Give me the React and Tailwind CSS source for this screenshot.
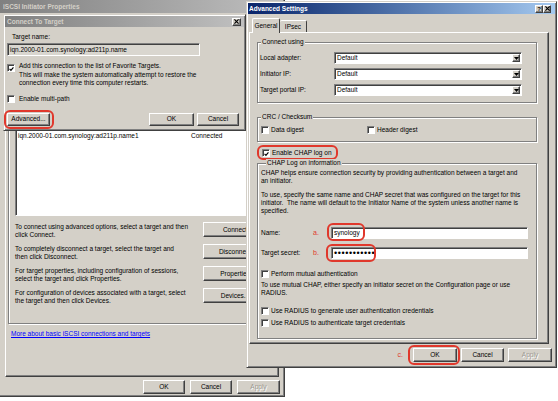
const raised =
  "border border-t-white border-l-white border-r-[#404040] border-b-[#404040] shadow-[inset_-1px_-1px_0_#808080]";
const sunken =
  "border border-t-[#808080] border-l-[#808080] border-r-white border-b-white shadow-[inset_1px_1px_0_#404040]";
const frame =
  "border border-t-[#d4d0c8] border-l-[#d4d0c8] border-r-[#404040] border-b-[#404040] shadow-[inset_1px_1px_0_white,inset_-1px_-1px_0_#808080]";
const etched = "border border-[#808080] shadow-[inset_1px_1px_0_white,1px_1px_0_white]";

function Btn({ w, h = "h-[14px]", children, disabled, className = "" }) {
  return (
    <div
      className={`${raised} ${w} ${h} shrink-0 flex items-center justify-center bg-[#d4d0c8] ${
        disabled ? "text-[#9a978f] [text-shadow:1px_1px_0_white]" : ""
      } ${className}`}
    >
      {children}
    </div>
  );
}

function Check({ checked }) {
  return (
    <div className={`${sunken} w-[8px] h-[8px] shrink-0 bg-white flex items-center justify-center`}>
      {checked && (
        <svg width="6" height="6" viewBox="0 0 7 7" className="ml-[1px] mt-[1px]">
          <path d="M0.8 3.4 L2.7 5.3 L6.2 1.2" fill="none" stroke="#000" strokeWidth="1.6" />
        </svg>
      )}
    </div>
  );
}

function CheckRow({ checked, children, className = "" }) {
  return (
    <div className={`flex items-center gap-[2px] h-[8px] ${className}`}>
      <Check checked={checked} />
      <span>{children}</span>
    </div>
  );
}

function Group({ label, labelLeft = "left-[3px]", className, children }) {
  return (
    <div className={`relative ${etched} ${className}`}>
      <span className={`absolute top-[-5px] ${labelLeft} px-[1px] bg-[#d4d0c8] leading-[8px]`}>{label}</span>
      {children}
    </div>
  );
}

function Dropdown() {
  return (
    <div className={`${sunken} w-[188px] h-[12px] bg-white flex items-center justify-between pl-[2px] pr-[1px]`}>
      <span>Default</span>
      <div className={`${raised} w-[8px] h-[8px] bg-[#d4d0c8] flex items-center justify-center`}>
        <svg width="5" height="3" viewBox="0 0 5 3">
          <path d="M0 0 H5 L2.5 3 Z" fill="#000" />
        </svg>
      </div>
    </div>
  );
}

function Ring({ className }) {
  return <span className={`absolute border-2 border-[#e0382c] rounded-[6px] pointer-events-none ${className}`} />;
}

function XIcon() {
  return (
    <svg width="5" height="5" viewBox="0 0 6 6">
      <path d="M0.5 0.5 L5.5 5.5 M5.5 0.5 L0.5 5.5" stroke="#000" strokeWidth="1.4" />
    </svg>
  );
}

function BackWindow() {
  const rows = [
    ["To connect using advanced options, select a target and then", "click Connect.", "Connect"],
    ["To completely disconnect a target, select the target and", "then click Disconnect.", "Disconnect"],
    ["For target properties, including configuration of sessions,", "select the target and click Properties.", "Properties"],
    ["For configuration of devices associated with a target, select", "the target and then click Devices.", "Devices..."],
  ];
  return (
    <div className={`absolute left-[-2px] top-[-2px] w-[287px] h-[399px] bg-[#d4d0c8] p-[1px] ${frame}`}>
      <div className="h-[13px] bg-gradient-to-r from-[#808080] to-[#c0c0c0] flex items-center pl-[3px] text-[#d4d0c8] font-bold text-[6.5px]">
        iSCSI Initiator Properties
      </div>
      <div className={`mt-[6px] ml-[5px] w-[274px] h-[358px] ${raised}`}>
        <div className={`${etched} ml-[2px] mt-[6px] w-[266px] h-[298px]`}>
          <div className={`${sunken} ml-[6px] mt-[13px] w-[254px] h-[176px] bg-white pt-[91px] pl-[2px]`}>
            <div className="flex h-[8px] items-center">
              <span className="w-[173px]">iqn.2000-01.com.synology:ad211p.name1</span>
              <span>Connected</span>
            </div>
          </div>
          <div className="mt-[6px] flex flex-col gap-[7px]">
            {rows.map(([a, b, btn]) => (
              <div key={btn} className="flex h-[15px]">
                <div className="w-[194px] pl-[6px] pt-[1px]">
                  <div>{a}</div>
                  <div>{b}</div>
                </div>
                <Btn w="w-[64px]" h="h-[15px]">
                  {btn}
                </Btn>
              </div>
            ))}
          </div>
        </div>
        <div className="mt-[6px] ml-[5px] text-[#0000ff] underline">More about basic iSCSI connections and targets</div>
      </div>
      <div className="mt-[3px] flex justify-end gap-[5px] pr-[3px]">
        <Btn w="w-[42px]">OK</Btn>
        <Btn w="w-[42px]">Cancel</Btn>
        <Btn w="w-[43px]" disabled>
          Apply
        </Btn>
      </div>
    </div>
  );
}

function ConnectDialog() {
  return (
    <div className={`absolute left-[3px] top-[14px] w-[243px] h-[117px] bg-[#d4d0c8] p-[1px] ${frame}`}>
      <div className="h-[11px] bg-gradient-to-r from-[#808080] to-[#c0c0c0] flex items-center justify-between pl-[2px] pr-[3px] text-[#d4d0c8] font-bold text-[6.5px]">
        <span>Connect To Target</span>
        <div className={`${raised} w-[9px] h-[8px] bg-[#d4d0c8] flex items-center justify-center`}>
          <XIcon />
        </div>
      </div>
      <div className="pl-[2px]">
        <div className="mt-[6px] ml-[5px]">Target name:</div>
        <div className={`${sunken} mt-[2px] w-[193px] h-[13px] flex items-center pl-[2px] bg-[#d9d6cf]`}>
          iqn.2000-01.com.synology:ad211p.name
        </div>
        <div className="mt-[6px] flex items-start gap-[4px]">
          <div className="mt-[2px]">
            <Check checked />
          </div>
          <div className="leading-[8.5px]">
            <div>Add this connection to the list of Favorite Targets.</div>
            <div>This will make the system automatically attempt to restore the</div>
            <div>connection every time this computer restarts.</div>
          </div>
        </div>
        <div className="mt-[7px] flex items-center gap-[4px] h-[8px]">
          <Check />
          <span>Enable multi-path</span>
        </div>
        <div className="mt-[10px] flex items-center">
          <div className="relative">
            <Btn w="w-[43px]" h="h-[13px]">
              Advanced...
            </Btn>
            <Ring className="left-[-3px] right-[-4px] top-[-3px] bottom-[-3px]" />
          </div>
          <div className="ml-auto mr-[5px] flex gap-[3px]">
            <Btn w="w-[45px]" h="h-[13px]">
              OK
            </Btn>
            <Btn w="w-[42px]" h="h-[13px]">
              Cancel
            </Btn>
          </div>
        </div>
      </div>
    </div>
  );
}

function AdvancedDialog() {
  return (
    <div className={`absolute left-[246px] top-[1px] w-[311px] h-[367px] bg-[#d4d0c8] p-[1px] ${frame}`}>
      <div className="h-[11px] bg-gradient-to-r from-[#0a246a] to-[#a6caf0] flex items-center justify-between pl-[1px] pr-[4px] text-white font-bold text-[6.5px]">
        <span>Advanced Settings</span>
        <div className="flex">
          <div className={`${raised} w-[8px] h-[8px] bg-[#d4d0c8] flex items-center justify-center text-black text-[6px] font-bold`}>
            ?
          </div>
          <div className={`${raised} w-[8px] h-[8px] bg-[#d4d0c8] flex items-center justify-center`}>
            <XIcon />
          </div>
        </div>
      </div>
      <div className="mt-[4px] ml-[4px] flex items-end">
        <div className="relative z-10 -mb-[1px] w-[28px] h-[15px] bg-[#d4d0c8] border-t border-l border-t-white border-l-white border-r border-r-[#404040] rounded-t-[2px] flex items-center justify-center">
          General
        </div>
        <div className="w-[27px] h-[12px] border-t border-t-white border-r border-r-[#404040] rounded-t-[2px] flex items-center justify-center">
          IPsec
        </div>
      </div>
      <div className={`ml-[1px] w-[300px] h-[312px] ${raised}`}>
        <Group label="Connect using" className="mt-[9px] ml-[7px] w-[280px] h-[61px]">
          <div className="pt-[9px] flex flex-col gap-[4px]">
            {["Local adapter:", "Initiator IP:", "Target portal IP:"].map((l) => (
              <div key={l} className="flex items-center h-[12px]">
                <span className="w-[76px] pl-[2px]">{l}</span>
                <Dropdown />
              </div>
            ))}
          </div>
        </Group>
        <Group label="CRC / Checksum" className="mt-[14px] ml-[7px] w-[280px] h-[25px]">
          <div className="pt-[8px] pl-[3px] flex">
            <CheckRow className="w-[106px]">Data digest</CheckRow>
            <CheckRow>Header digest</CheckRow>
          </div>
        </Group>
        <div className="relative mt-[7px] ml-[12px] w-fit">
          <CheckRow checked>Enable CHAP log on</CheckRow>
          <Ring className="left-[-5px] right-[-6px] top-[-4px] bottom-[-3px]" />
        </div>
        <Group label="CHAP Log on information" labelLeft="left-[8px]" className="mt-[6px] ml-[7px] w-[280px] h-[176px]">
          <div className="pt-[5px] px-[3px]">
            <div>CHAP helps ensure connection security by providing authentication between a target and</div>
            <div>an initiator.</div>
            <div className="mt-[6px]">
              <div>To use, specify the same name and CHAP secret that was configured on the target for this</div>
              <div>initiator.&nbsp; The name will default to the Initiator Name of the system unless another name is</div>
              <div>specified.</div>
            </div>
            <div className="mt-[12px] flex items-center h-[12px]">
              <span className="w-[52px]">Name:</span>
              <span className="w-[18px] text-[#e0382c] text-[7px]">a.</span>
              <div className="relative">
                <div className={`${sunken} w-[197px] h-[12px] bg-white flex items-center pl-[2px]`}>synology</div>
                <Ring className="left-[-4px] top-[-4px] bottom-[-2px] w-[38px]" />
              </div>
            </div>
            <div className="mt-[8px] flex items-center h-[12px]">
              <span className="w-[52px]">Target secret:</span>
              <span className="w-[18px] text-[#e0382c] text-[7px]">b.</span>
              <div className="relative">
                <div className={`${sunken} w-[197px] h-[12px] bg-white flex items-center pl-[2px] text-[9px] tracking-[0.6px]`}>
                  •••••••••••
                </div>
                <Ring className="left-[-5px] top-[-3px] bottom-[-3px] w-[50px]" />
              </div>
            </div>
            <CheckRow className="mt-[11px]">Perform mutual authentication</CheckRow>
            <div className="mt-[3px]">
              <div>To use mutual CHAP, either specify an initiator secret on the Configuration page or use</div>
              <div>RADIUS.</div>
            </div>
            <CheckRow className="mt-[10px]">Use RADIUS to generate user authentication credentials</CheckRow>
            <CheckRow className="mt-[4px]">Use RADIUS to authenticate target credentials</CheckRow>
          </div>
        </Group>
      </div>
      <div className="mt-[4px] mr-[3px] flex justify-end items-center gap-[4px]">
        <span className="text-[#e0382c] text-[7px] mr-[6px]">c.</span>
        <div className="relative">
          <Btn w="w-[44px]">OK</Btn>
          <Ring className="left-[-5px] right-[-3px] top-[-3px] bottom-[-3px]" />
        </div>
        <Btn w="w-[43px]">Cancel</Btn>
        <Btn w="w-[44px]" disabled>
          Apply
        </Btn>
      </div>
    </div>
  );
}

export default function App() {
  return (
    <div className="relative w-[558px] h-[401px] bg-white overflow-hidden font-['Liberation_Sans',Arial,sans-serif] text-[6.5px] leading-[8px] text-black">
      <BackWindow />
      <ConnectDialog />
      <AdvancedDialog />
    </div>
  );
}
